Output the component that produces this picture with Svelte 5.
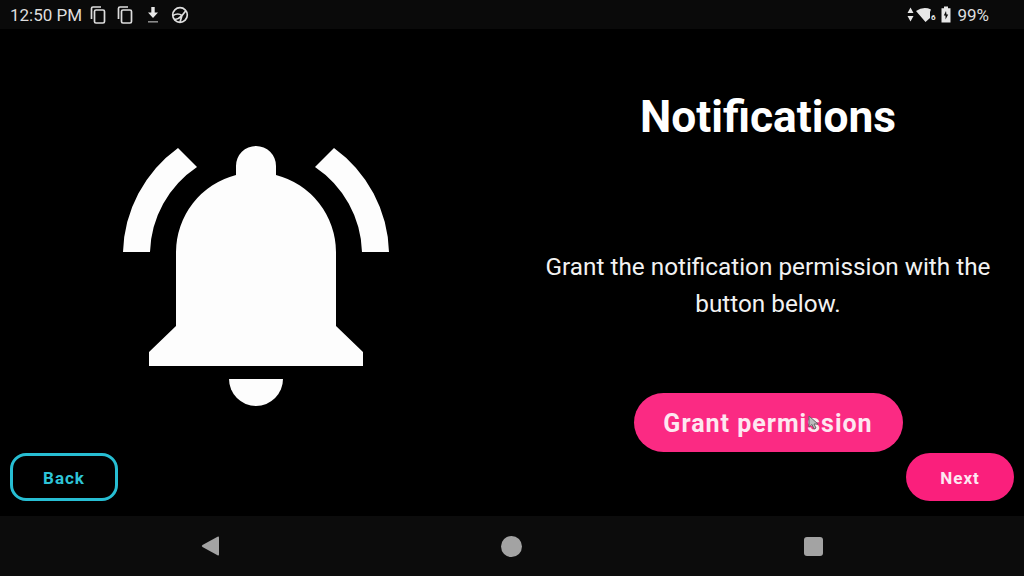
<script>
	let title = 'Notifications';
	let message = 'Grant the notification permission with the button below.';
</script>

<div class="screen">
	<header class="status-bar">
		<div class="status-left">
			<span class="clock">12:50 PM</span>
			<svg class="ic" width="16" height="20" viewBox="0 0 16 20">
				<path d="M11 2H3Q1.500 2 1.500 3.500V14" />
				<rect x="4.500" y="5" width="10" height="13" rx="1.500" />
			</svg>
			<svg class="ic" width="16" height="20" viewBox="0 0 16 20">
				<path d="M11 2H3Q1.500 2 1.500 3.500V14" />
				<rect x="4.500" y="5" width="10" height="13" rx="1.500" />
			</svg>
			<svg class="ic solid down" width="12" height="18" viewBox="0 0 12 18">
				<path d="M4.300 1H7.700V6.500H11L6 12L1 6.500H4.300Z" />
				<rect class="dim" x="1" y="15" width="10" height="1.600" />
			</svg>
			<svg class="ic wheel" width="18" height="18" viewBox="0 0 18 18">
				<circle cx="9" cy="9" r="7.300" />
				<path d="M2 9.500Q7 6.500 11 9.500L15 4.500M11 9.500L9 16M3.500 13.500Q8 13 11 9.500" />
			</svg>
		</div>
		<div class="status-right">
			<svg class="ic solid" width="7" height="15" viewBox="0 0 7 15">
				<path d="M3.500 0.500L6.500 6H0.500ZM3.500 14.500L0.500 9H6.500Z" />
			</svg>
			<svg class="ic solid wifi" width="21" height="16" viewBox="0 0 21 16">
				<path d="M0 4Q7.500 -1 15 2.500L14 5V11L9.500 15Z" />
				<text x="15" y="13" font-size="8" font-weight="700">6</text>
			</svg>
			<svg class="ic solid" width="10" height="17" viewBox="0 0 10 17">
				<path d="M3 0.500H7V2.200H9.500V16.500H0.500V2.200H3ZM5 5L2.800 9.500H4.500V13.500L7.200 8.500H5.500Z" fill-rule="evenodd" />
			</svg>
			<span class="battery">99%</span>
		</div>
	</header>

	<main class="page">
		<div class="content">
			<section class="art">
				<svg class="bell" width="266" height="262" viewBox="123 146 266 262">
					<path d="M123 252A133 133 0 0 1 178 148L197 167A106 106 0 0 0 150 252Z" />
					<path d="M389 252A133 133 0 0 0 334 148L315 167A106 106 0 0 1 362 252Z" />
					<path d="M236 175V166A20 20 0 0 1 276 166V175A80 80 0 0 1 336 252V326L363 352V366H149V352L176 326V252A80 80 0 0 1 236 175Z" />
					<path d="M229 379H283A27 27 0 0 1 229 379Z" />
				</svg>
			</section>
			<section class="info">
				<h1>{title}</h1>
				<p>{message}</p>
				<button class="grant">
					Grant permission
					<svg class="cursor" width="11" height="15" viewBox="0 0 11 15">
						<path d="M1 1V12L4 9.500L6 14L8 13L6 9H10Z" />
					</svg>
				</button>
			</section>
		</div>
		<div class="actions">
			<button class="back">Back</button>
			<button class="next">Next</button>
		</div>
	</main>

	<nav class="nav-bar">
		<svg width="20" height="20" viewBox="0 0 20 20"><path d="M18 1.500V18.500Q18 20 16.500 19.300L1.500 11Q0 10 1.500 9L16.500 0.700Q18 0 18 1.500Z" /></svg>
		<span class="home"></span>
		<span class="recents"></span>
	</nav>
</div>

<style>
	:global(body) {
		margin: 0;
		background: #000;
	}

	.screen {
		width: 1024px;
		height: 576px;
		display: flex;
		flex-direction: column;
		overflow: hidden;
		font-family: Roboto, sans-serif;
		color: #fff;
		background: #000;
	}

	.status-bar {
		height: 29px;
		flex: none;
		display: flex;
		align-items: center;
		justify-content: space-between;
		padding: 0 35px 0 10px;
		background: #0a0a0a;
		color: #dedede;
		font-size: 17px;
	}

	.status-left,
	.status-right {
		display: flex;
		align-items: center;
	}

	.status-left {
		gap: 11px;
	}

	.status-right {
		gap: 2px;
	}

	.clock {
		margin-right: -3px;
	}

	.battery {
		margin-left: 4px;
	}

	.down {
		margin-left: 3px;
		margin-right: 1px;
	}

	.ic {
		fill: none;
		stroke: #dedede;
		stroke-width: 1.7;
	}

	.ic.solid {
		fill: #e8e8e8;
		stroke: none;
	}

	.dim {
		fill: #8a8a8a;
	}

	.wifi {
		margin-right: 2px;
	}

	.page {
		flex: 1;
		display: flex;
		flex-direction: column;
	}

	.content {
		flex: 1;
		display: grid;
		grid-template-columns: 512px 512px;
	}

	.art {
		display: flex;
		justify-content: center;
		padding-top: 117px;
	}

	.bell {
		fill: #fdfdfd;
	}

	.info {
		display: flex;
		flex-direction: column;
		align-items: center;
		text-align: center;
	}

	h1 {
		margin: 61px 0 0;
		font-size: 44.3px;
		line-height: 54px;
		font-weight: 700;
	}

	p {
		margin: 104px 0 0;
		width: 470px;
		font-size: 24.3px;
		line-height: 37px;
		color: #f2f2f2;
	}

	button {
		font-family: inherit;
		font-weight: 700;
		border: none;
		padding: 1px 0 0;
		cursor: pointer;
		letter-spacing: 1px;
	}

	.grant {
		position: relative;
		margin-top: 71px;
		width: 269px;
		height: 59px;
		border-radius: 30px;
		background: #fb2a83;
		color: #fde8f1;
		font-size: 25px;
	}

	.cursor {
		position: absolute;
		left: 174px;
		top: 22px;
		fill: #bbb;
		stroke: #666;
		stroke-width: 1;
	}

	.actions {
		flex: none;
		display: flex;
		justify-content: space-between;
		padding: 0 10px 15px;
	}

	.back,
	.next {
		width: 108px;
		height: 48px;
		font-size: 17px;
	}

	.back {
		box-sizing: border-box;
		background: transparent;
		border: 3px solid #27bed3;
		border-radius: 16px;
		color: #2ec4d8;
	}

	.next {
		border-radius: 24px;
		background: #fa1f7c;
		color: #fde8f1;
	}

	.nav-bar {
		height: 60px;
		flex: none;
		display: flex;
		align-items: center;
		justify-content: center;
		gap: 281px;
		background: #0c0c0c;
		fill: #a3a3a3;
	}

	.home {
		width: 21px;
		height: 21px;
		margin: 0 1px 0 -1px;
		border-radius: 50%;
		background: #a3a3a3;
	}

	.recents {
		width: 19px;
		height: 19px;
		border-radius: 3px;
		background: #a3a3a3;
	}
</style>
